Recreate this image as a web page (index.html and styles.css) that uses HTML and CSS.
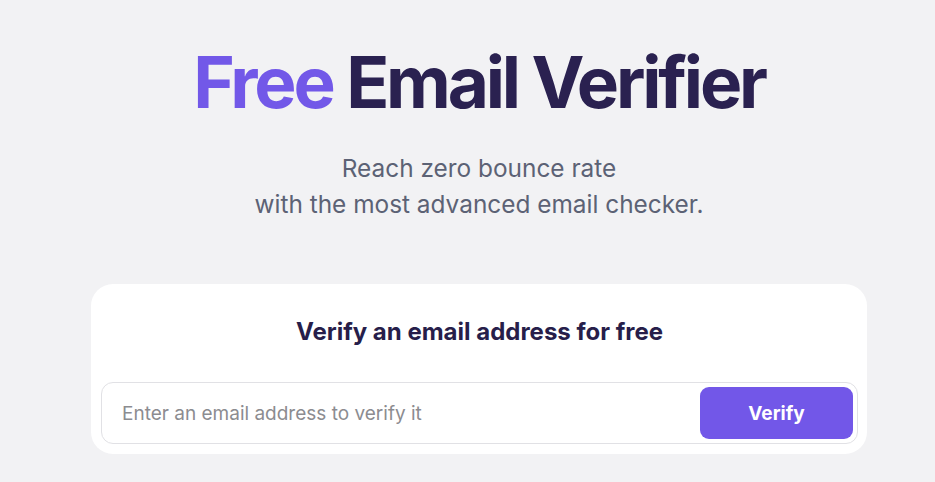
FILE: index.html
```html
<!DOCTYPE html>
<html lang="en">
<head>
<meta charset="utf-8">
<title>Free Email Verifier</title>
<link rel="stylesheet" href="styles.css">
</head>
<body>
<main class="page">
  <h1 class="title"><span class="accent">Free</span> Email Verifier</h1>
  <p class="subtitle">Reach zero bounce rate<br>with the most advanced email checker.</p>
  <section class="card">
    <h2 class="card-title">Verify an email address for free</h2>
    <form class="verify-form">
      <input class="email-input" type="email" placeholder="Enter an email address to verify it">
      <button class="verify-btn" type="button">Verify</button>
    </form>
  </section>
</main>
</body>
</html>
```

FILE: styles.css
```css
* { box-sizing: border-box; }
html, body { margin: 0; padding: 0; }
body {
  background: #f2f2f4;
  font-family: Inter, "Noto Sans", sans-serif;
  height: 482px;
  overflow: hidden;
}
.page {
  display: flex;
  flex-direction: column;
  align-items: center;
  padding: 39px 0 0 23px;
}
.title {
  margin: 0;
  font-size: 71px;
  font-weight: 700;
  letter-spacing: -3.2px;
  line-height: 86px;
  color: #2a2150;
}
.accent { color: #7258e8; }
.subtitle {
  margin: 25px 0 0;
  text-align: center;
  font-size: 24.4px;
  line-height: 36px;
  color: #5c6275;
}
.card {
  margin-top: 62px;
  width: 776px;
  background: #fff;
  border-radius: 22px;
  padding: 33px 9px 10px 10px;
  display: flex;
  flex-direction: column;
  align-items: center;
}
.card-title {
  margin: 0;
  font-size: 24px;
  font-weight: 700;
  line-height: 30px;
  color: #271e4a;
}
.verify-form {
  margin-top: 35px;
  width: 100%;
  display: flex;
  align-items: center;
  border: 1px solid #e1e1e5;
  border-radius: 12px;
  padding: 4px;
  height: 62px;
}
.email-input {
  flex: 1;
  border: 0;
  outline: 0;
  background: transparent;
  font-family: inherit;
  font-size: 19px;
  padding: 0 0 0 16px;
  color: #333;
}
.email-input::placeholder { color: #8c8c90; }
.verify-btn {
  width: 153px;
  height: 52px;
  border: 0;
  border-radius: 9px;
  background: #7257e8;
  color: #fff;
  font-family: inherit;
  font-size: 19px;
  font-weight: 700;
}
```
